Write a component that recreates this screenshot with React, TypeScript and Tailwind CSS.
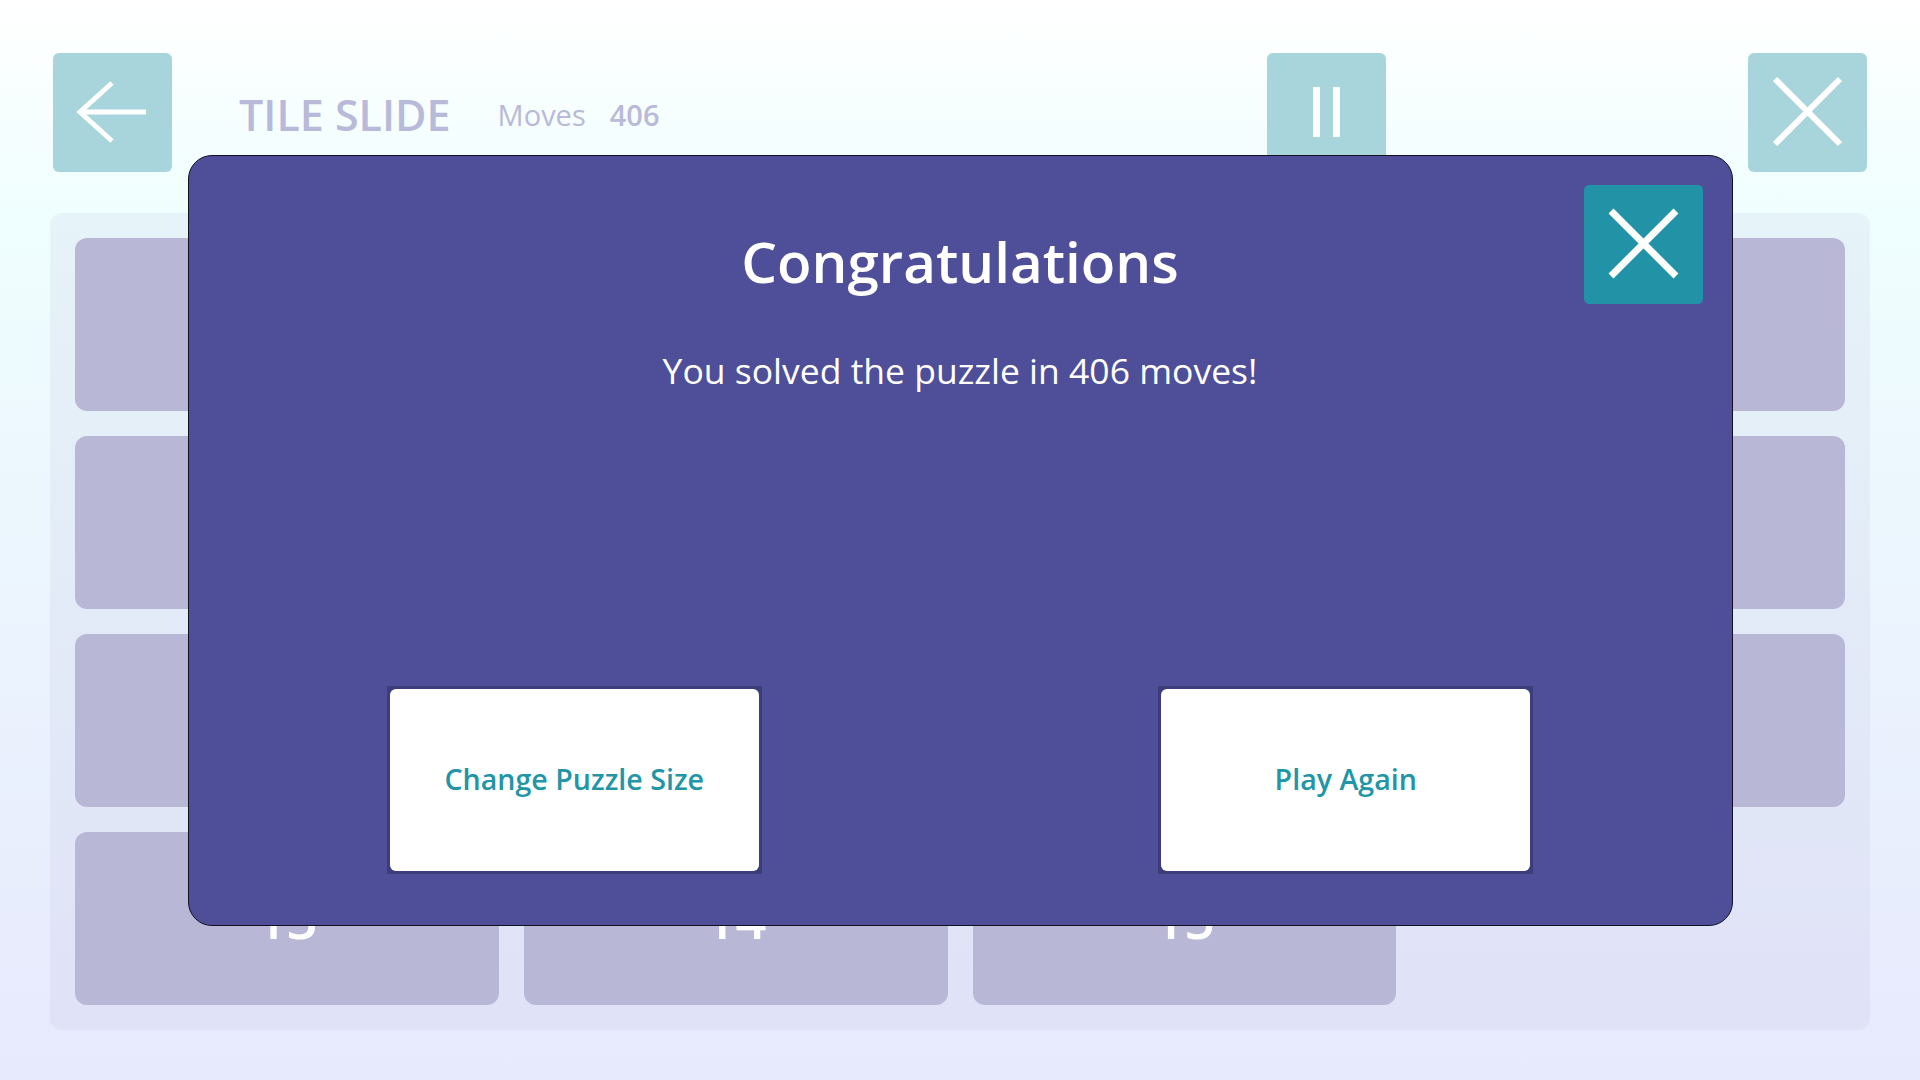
import React from 'react'

const font = { fontFamily: '"Open Sans", "Noto Sans", sans-serif' }

function BackIcon() {
  return (
    <svg width="119" height="119" viewBox="0 0 119 119" fill="none">
      <path d="M27 59 H93" stroke="white" strokeWidth="5" />
      <path d="M59 30 L27 59 L59 88" stroke="white" strokeWidth="5" />
    </svg>
  )
}

function PauseIcon() {
  return (
    <svg width="119" height="119" viewBox="0 0 119 119">
      <rect x="46" y="34" width="7" height="50" fill="white" />
      <rect x="66" y="34" width="7" height="50" fill="white" />
    </svg>
  )
}

function CloseIcon({ stroke = 6 }: { stroke?: number }) {
  return (
    <svg width="119" height="119" viewBox="0 0 119 119" fill="none">
      <path d="M27 26 L92 91 M92 26 L27 91" stroke="white" strokeWidth={stroke} />
    </svg>
  )
}

const tiles = Array.from({ length: 16 }, (_, i) => (i < 15 ? i + 1 : null))

export default function App() {
  return (
    <div
      className="relative h-[1080px] w-full overflow-hidden bg-[linear-gradient(to_bottom,#ffffff_0%,#effefe_20%,#e7e9fd_100%)]"
      style={font}
    >
      {/* header */}
      <div className="flex items-center px-[53px] pt-[53px]">
        <button className="flex h-[119px] w-[119px] items-center justify-center rounded-[6px] bg-[#a8d4db]">
          <BackIcon />
        </button>
        <h1 className="ml-[67px] mt-[4px] text-[43px] font-semibold leading-none text-[#b9b9d9]">TILE SLIDE</h1>
        <span className="ml-[47px] mt-[4px] text-[29px] leading-none text-[#b9b9d9]">Moves</span>
        <span className="ml-[24px] mt-[4px] text-[29px] font-semibold leading-none text-[#b9b9d9]">406</span>
        <button className="ml-auto flex h-[119px] w-[119px] items-center justify-center rounded-[6px] bg-[#a8d4db]">
          <PauseIcon />
        </button>
        <button className="ml-[362px] flex h-[119px] w-[119px] items-center justify-center rounded-[6px] bg-[#a8d4db]">
          <CloseIcon />
        </button>
      </div>

      {/* board */}
      <div className="mx-[50px] mt-[41px] grid grid-cols-4 gap-[25px] rounded-[12px] bg-[#b8b8d6]/15 p-[25px]">
        {tiles.map((n, i) =>
          n ? (
            <div
              key={i}
              className="flex h-[173px] items-center justify-center rounded-[12px] bg-[#b8b8d6] text-[54px] font-semibold text-white"
            >
              {n}
            </div>
          ) : (
            <div key={i} className="h-[173px]" />
          )
        )}
      </div>

      {/* dialog */}
      <div className="absolute inset-0 flex items-center justify-center">
        <div className="relative flex h-[771px] w-[1545px] flex-col items-center rounded-[24px] border border-[#111122] bg-[#4f4e98]">
          <button className="absolute right-[29px] top-[29px] flex h-[119px] w-[119px] items-center justify-center rounded-[5px] bg-[#2292a7]">
            <CloseIcon stroke={7} />
          </button>
          <h2 className="mt-[78px] text-[56.5px] font-semibold leading-none text-white">Congratulations</h2>
          <p className="mt-[63px] text-[35.5px] leading-none text-white">You solved the puzzle in 406 moves!</p>
          <div className="mt-auto mb-[51px] flex w-full justify-around">
            <div className="w-[375px] bg-[#3e3d7c] p-[3px]">
              <button className="flex h-[182px] w-full items-center justify-center rounded-[6px] bg-white text-[28.6px] font-semibold text-[#2295a7]">
                Change Puzzle Size
              </button>
            </div>
            <div className="w-[375px] bg-[#3e3d7c] p-[3px]">
              <button className="flex h-[182px] w-full items-center justify-center rounded-[6px] bg-white text-[28.6px] font-semibold text-[#2295a7]">
                Play Again
              </button>
            </div>
          </div>
        </div>
      </div>
    </div>
  )
}
